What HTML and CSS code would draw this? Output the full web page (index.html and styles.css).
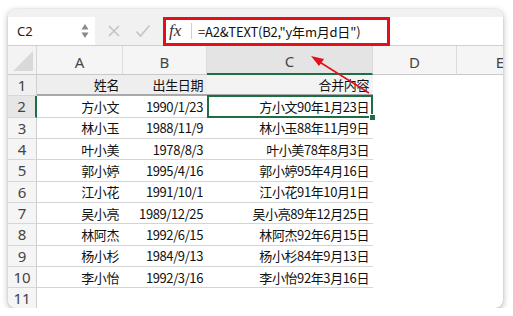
FILE: index.html
```html
<!DOCTYPE html>
<html>
<head>
<meta charset="utf-8">
<link rel="stylesheet" href="styles.css">
</head>
<body>
<div class="window">
  <div class="toolbar">
    <div class="namebox">
      <span class="ref">C2</span>
      <svg class="spin" width="8" height="16" viewBox="0 0 8 16"><path d="M4 1 L7.5 6.5 L0.5 6.5 Z" fill="#8a8a8a"/><path d="M4 15 L7.5 9.5 L0.5 9.5 Z" fill="#8a8a8a"/></svg>
    </div>
    <div class="actions">
      <svg width="14" height="14" viewBox="0 0 14 14"><path d="M2 2 L12 12 M12 2 L2 12" stroke="#c4c4c4" stroke-width="1.6" fill="none"/></svg>
      <svg width="16" height="14" viewBox="0 0 16 14"><path d="M1.5 7.5 L5.5 12 L14.5 1.5" stroke="#c4c4c4" stroke-width="1.6" fill="none"/></svg>
    </div>
    <div class="formula">
      <span class="fx">fx</span>
      <span class="sep"></span>
      <span class="ftext">=A2&amp;TEXT(B2,"y年m月d日")</span>
    </div>
  </div>
  <div class="sheet">
    <div class="corner"></div>
    <div class="colh">A</div>
    <div class="colh">B</div>
    <div class="colh sel">C</div>
    <div class="colh">D</div>
    <div class="colh last">E</div>

    <div class="rowh r1">1</div><div class="cell r1 b">姓名</div><div class="cell r1 b">出生日期</div><div class="cell r1 b c1">合并内容</div><div class="empty"></div><div class="empty"></div>
    <div class="rowh selr">2</div><div class="cell b">方小文</div><div class="cell b">1990/1/23</div><div class="cell b active">方小文90年1月23日<span class="handle"></span></div><div class="empty"></div><div class="empty"></div>
    <div class="rowh">3</div><div class="cell b">林小玉</div><div class="cell b">1988/11/9</div><div class="cell b">林小玉88年11月9日</div><div class="empty"></div><div class="empty"></div>
    <div class="rowh">4</div><div class="cell b">叶小美</div><div class="cell b">1978/8/3</div><div class="cell b">叶小美78年8月3日</div><div class="empty"></div><div class="empty"></div>
    <div class="rowh">5</div><div class="cell b">郭小婷</div><div class="cell b">1995/4/16</div><div class="cell b">郭小婷95年4月16日</div><div class="empty"></div><div class="empty"></div>
    <div class="rowh">6</div><div class="cell b">江小花</div><div class="cell b">1991/10/1</div><div class="cell b">江小花91年10月1日</div><div class="empty"></div><div class="empty"></div>
    <div class="rowh">7</div><div class="cell b">吴小亮</div><div class="cell b">1989/12/25</div><div class="cell b">吴小亮89年12月25日</div><div class="empty"></div><div class="empty"></div>
    <div class="rowh">8</div><div class="cell b">林阿杰</div><div class="cell b">1992/6/15</div><div class="cell b">林阿杰92年6月15日</div><div class="empty"></div><div class="empty"></div>
    <div class="rowh">9</div><div class="cell b">杨小杉</div><div class="cell b">1984/9/13</div><div class="cell b">杨小杉84年9月13日</div><div class="empty"></div><div class="empty"></div>
    <div class="rowh">10</div><div class="cell b">李小怡</div><div class="cell b">1992/3/16</div><div class="cell b">李小怡92年3月16日</div><div class="empty"></div><div class="empty"></div>
    <div class="rowh">11</div><div class="cell"></div><div class="cell"></div><div class="cell"></div><div class="empty"></div><div class="empty"></div>
  </div>
  <div class="redbox"></div>
  <svg class="arrow" width="495" height="299" viewBox="0 0 495 299">
    <line x1="361" y1="84" x2="310" y2="52" stroke="#e3101b" stroke-width="1.6"/>
    <path d="M303 47 L316 50 L311 57 Z" fill="#e3101b"/>
  </svg>
</div>
</body>
</html>
```

FILE: styles.css
```css
html, body {
  margin: 0;
  padding: 0;
  background: #ffffff;
}
body {
  font-family: "Noto Sans CJK SC", "Noto Sans", sans-serif;
}
.window {
  position: relative;
  margin: 9px 0 0 8px;
  width: 495px;
  height: 299px;
  border-radius: 8px;
  overflow: hidden;
  background: #ffffff;
  box-shadow: 0 2px 6px rgba(0, 0, 0, 0.3), 0 0 1px rgba(0, 0, 0, 0.2);
}
.toolbar {
  display: flex;
  height: 37px;
  padding-top: 8px;
  box-sizing: border-box;
  background: #f1f1f1;
  border-bottom: 1px solid #cfcfcf;
}
.namebox {
  width: 87px;
  height: 28px;
  background: #ffffff;
  display: flex;
  align-items: center;
  justify-content: space-between;
  padding: 0 6px 0 9px;
  box-sizing: border-box;
}
.ref {
  font-family: "Noto Sans", sans-serif;
  font-size: 13px;
  color: #222;
}
.actions {
  width: 68px;
  height: 28px;
  display: flex;
  align-items: center;
  gap: 14px;
  padding-left: 12px;
  box-sizing: border-box;
}
.formula {
  flex: 1;
  height: 28px;
  background: #ffffff;
  display: flex;
  align-items: center;
}
.fx {
  font-family: "Liberation Serif", serif;
  font-style: italic;
  font-size: 17px;
  color: #333;
  margin-left: 6px;
  width: 18px;
}
.sep {
  width: 1px;
  height: 16px;
  background: #d0d0d0;
  margin: 0 6px 0 4px;
}
.ftext {
  font-size: 13px;
  color: #111;
  letter-spacing: -0.2px;
}
.sheet {
  display: grid;
  grid-template-columns: 29px 86px 84px 166px 84px 86px;
  grid-template-rows: 29px repeat(11, 21.33px);
}
.corner {
  background: #f3f3f3;
  border-right: 1px solid #d6d6d6;
  border-bottom: 1px solid #c9c9c9;
  position: relative;
}
.corner::after {
  content: "";
  position: absolute;
  right: 3px;
  bottom: 3px;
  border-style: solid;
  border-width: 0 0 20px 20px;
  border-color: transparent transparent #d9d9d9 transparent;
}
.colh {
  background: #f5f5f5;
  border-right: 1px solid #dcdcdc;
  border-bottom: 1px solid #c9c9c9;
  font-family: "Noto Sans", sans-serif;
  font-size: 15px;
  color: #444;
  display: flex;
  align-items: center;
  justify-content: center;
  padding-top: 3px;
  box-sizing: border-box;
}
.colh.sel {
  background: #e4e4e4;
  border-bottom: 2px solid #1f6e43;
}
.colh.last {
  border-right: none;
}
.rowh {
  background: #f5f5f5;
  border-right: 1px solid #cfcfcf;
  border-bottom: 1px solid #d6d6d6;
  font-family: "Noto Sans", sans-serif;
  font-size: 15px;
  color: #444;
  display: flex;
  align-items: center;
  justify-content: center;
  box-sizing: border-box;
}
.rowh.selr {
  background: #e6e6e6;
  border-right: 2px solid #1f6e43;
}
.cell {
  font-size: 13px;
  color: #111;
  letter-spacing: -0.4px;
  display: flex;
  align-items: center;
  justify-content: flex-end;
  padding-right: 4px;
  box-sizing: border-box;
  white-space: nowrap;
}
.cell.b {
  border-bottom: 1px solid #d4d4d4;
}
.cell.r1 {
  background: #eeeeee;
  border-bottom: 2px solid #a8a8a8;
}
.cell.r1.c1 {
  background: #f3f3f3;
}
.rowh.r1 {
  background: #f0f0f0;
}
.active {
  position: relative;
  overflow: visible;
}
.active::before {
  content: "";
  position: absolute;
  left: 0;
  top: -1px;
  right: 0;
  bottom: -1px;
  border: 2px solid #1f6e43;
}
.handle {
  position: absolute;
  right: -3px;
  bottom: -4px;
  width: 5px;
  height: 5px;
  background: #1f6e43;
  border: 1px solid #ffffff;
}
.redbox {
  position: absolute;
  left: 155px;
  top: 8px;
  width: 227px;
  height: 29px;
  border: 3px solid #e3101b;
  box-sizing: border-box;
}
.arrow {
  position: absolute;
  left: 0;
  top: 0;
  pointer-events: none;
}
```
